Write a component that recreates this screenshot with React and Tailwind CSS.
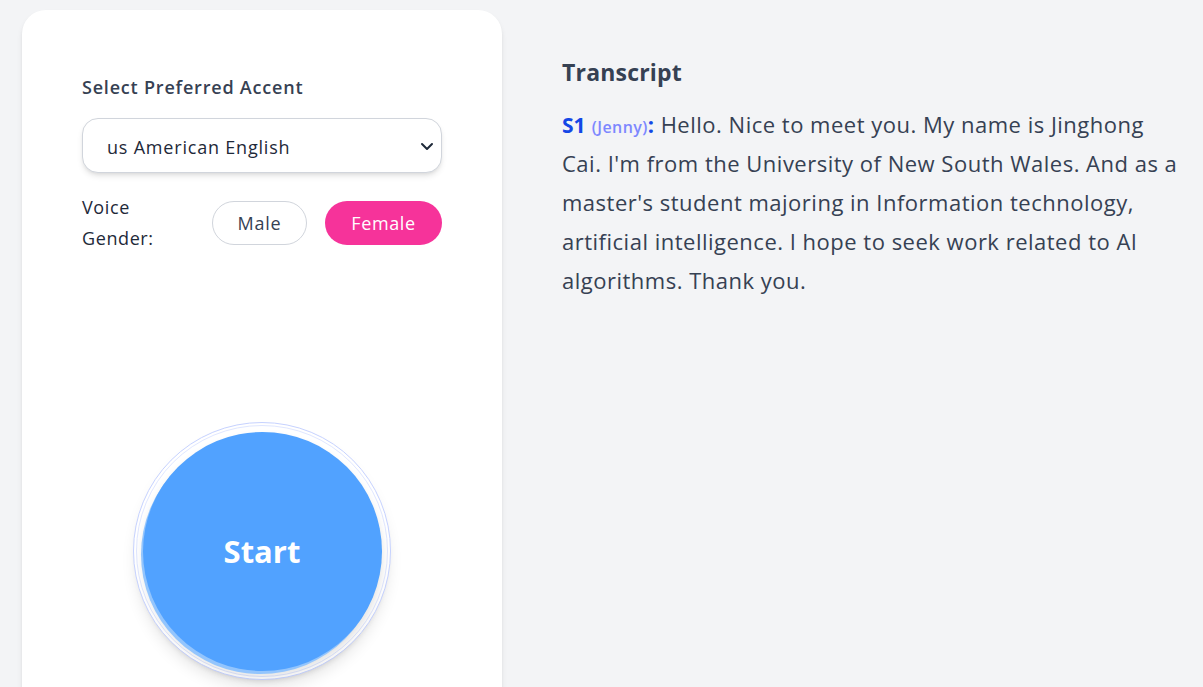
import React from "react";

const App = () => {
  return (
    <div className="flex h-[687px] overflow-hidden bg-gray-100 font-['Open_Sans','Noto_Sans',sans-serif] text-gray-700">
      <div className="ml-[22px] mt-[10px] flex h-[720px] w-[480px] shrink-0 flex-col rounded-3xl bg-white px-[60px] pt-[63px] shadow-md">
        <label className="text-[18px] font-semibold leading-7 tracking-[0.8px] text-gray-700">
          Select Preferred Accent
        </label>

        <div className="relative mt-[17px]">
          <div className="flex h-[55px] w-full items-center rounded-2xl border border-gray-300 bg-white pl-6 pt-[3px] text-[18px] tracking-[0.8px] text-gray-800 shadow-md">
            us American English
          </div>
          <svg
            className="absolute right-[7px] top-1/2 h-4 w-4 -translate-y-1/2 text-gray-800"
            viewBox="0 0 16 16"
            fill="none"
            stroke="currentColor"
            strokeWidth="2"
            strokeLinecap="round"
            strokeLinejoin="round"
          >
            <path d="M3 6l5 5 5-5" />
          </svg>
        </div>

        <div className="mt-[19px] flex items-center">
          <span className="w-[100px] text-[18px] leading-[31px] tracking-[0.6px] text-gray-800">
            Voice Gender:
          </span>
          <div className="ml-auto flex gap-[18px]">
            <button className="h-11 w-[95px] rounded-full border border-gray-300 bg-white text-[18px] tracking-[0.8px] text-gray-700">
              Male
            </button>
            <button className="h-11 w-[117px] rounded-full bg-pink-500 text-[18px] tracking-[0.6px] text-white">
              Female
            </button>
          </div>
        </div>

        <div className="mt-[168px] flex justify-center">
          <div className="flex h-[258px] w-[258px] items-center justify-center rounded-full border border-indigo-200 bg-white p-[2px] shadow-lg">
            <div className="flex h-full w-full items-center justify-center rounded-full border border-indigo-100">
              <button className="flex h-[239px] w-[239px] items-center justify-center rounded-full bg-blue-400 text-[31px] font-bold text-white shadow-[-2px_3px_0_#93c5fd,0_6px_10px_rgba(0,0,0,0.12)]">
                Start
              </button>
            </div>
          </div>
        </div>
      </div>

      <div className="flex-1 pl-[60px] pr-[18px] pt-[56px]">
        <h2 className="text-[23px] font-bold leading-8 tracking-[0.2px] text-gray-700">
          Transcript
        </h2>
        <p className="mt-[17px] text-[22px] leading-[39px] tracking-[0.5px] text-gray-700">
          <span className="text-[21px] font-bold leading-none tracking-normal text-blue-700">
            S1
          </span>{" "}
          <span className="text-[16px] font-semibold leading-none tracking-[0.4px] text-indigo-400">
            (Jenny)
          </span>
          <span className="font-bold leading-none text-blue-700">:</span> Hello.
          Nice to meet you. My name is Jinghong Cai. I'm from the University of
          New South Wales. And as a master's student majoring in Information
          technology, artificial intelligence. I hope to seek work related to AI
          algorithms. Thank you.
        </p>
      </div>
    </div>
  );
};

export default App;
